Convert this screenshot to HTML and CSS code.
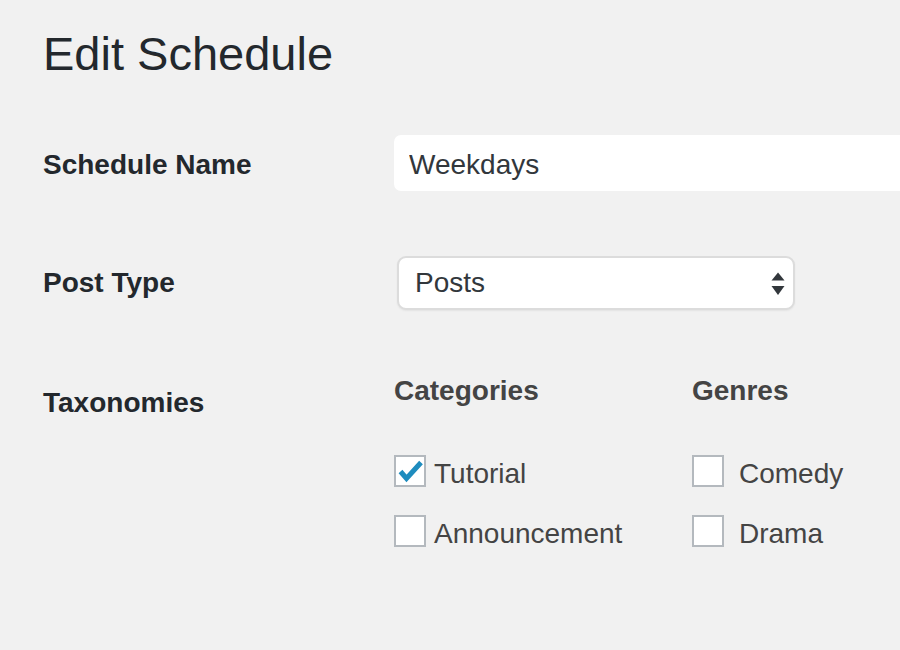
FILE: index.html
```html
<!DOCTYPE html>
<html lang="en">
<head>
<meta charset="utf-8">
<title>Edit Schedule</title>
<link rel="stylesheet" href="styles.css">
</head>
<body>
<div class="wrap">
  <h1 class="page-title">Edit Schedule</h1>
  <div class="form">
    <div class="row row-name">
      <label class="th" for="name">Schedule Name</label>
      <div class="td">
        <input id="name" class="text-input" type="text" value="Weekdays">
      </div>
    </div>
    <div class="row row-type">
      <label class="th" for="ptype">Post Type</label>
      <div class="td">
        <div class="select-wrap">
          <select id="ptype" class="select"><option>Posts</option></select>
          <svg class="select-arrows" width="14" height="24" viewBox="0 0 14 24" aria-hidden="true">
            <polygon points="0.5,8.5 7,0.5 13.5,8.5" fill="#32373c"/>
            <polygon points="0.5,14 13.5,14 7,23" fill="#32373c"/>
          </svg>
        </div>
      </div>
    </div>
    <div class="row row-tax">
      <div class="th th-tax">Taxonomies</div>
      <div class="td tax-cols">
        <div class="tax-col">
          <h3 class="tax-title">Categories</h3>
          <ul class="checks">
            <li class="check-item">
              <span class="box checked">
                <svg width="32" height="32" viewBox="0 0 32 32" aria-hidden="true"><path d="M6.5 16.5 L12.5 23.5 L27 7.5" fill="none" stroke="#1e8cbe" stroke-width="5"/></svg>
              </span>
              <span class="check-label">Tutorial</span>
            </li>
            <li class="check-item">
              <span class="box"></span>
              <span class="check-label">Announcement</span>
            </li>
          </ul>
        </div>
        <div class="tax-col">
          <h3 class="tax-title">Genres</h3>
          <ul class="checks checks-wide">
            <li class="check-item">
              <span class="box"></span>
              <span class="check-label">Comedy</span>
            </li>
            <li class="check-item">
              <span class="box"></span>
              <span class="check-label">Drama</span>
            </li>
          </ul>
        </div>
      </div>
    </div>
  </div>
</div>
</body>
</html>
```

FILE: styles.css
```css
html, body {
  margin: 0;
  padding: 0;
  background: #f1f1f1;
  overflow: hidden;
}

body {
  font-family: "Liberation Sans", Arial, Helvetica, sans-serif;
  color: #23282d;
  width: 900px;
  height: 650px;
}

.wrap {
  padding-left: 43px;
}

.page-title {
  margin: 0;
  padding-top: 26px;
  font-size: 47px;
  line-height: 56px;
  font-weight: 400;
  color: #23282d;
}

.row {
  display: flex;
}

.th {
  flex: 0 0 351px;
  font-size: 28px;
  line-height: 32px;
  font-weight: 700;
  color: #23282d;
}

.row-name {
  margin-top: 53px;
  align-items: baseline;
}

.row-type {
  margin-top: 65px;
  align-items: baseline;
}

.row-tax {
  margin-top: 65px;
  align-items: flex-start;
}

.th-tax {
  padding-top: 12px;
}

.text-input {
  display: block;
  box-sizing: border-box;
  width: 506px;
  height: 56px;
  margin: 0;
  padding: 4px 14px 0 15px;
  border: 0;
  border-radius: 7px 0 0 7px;
  background: #fff;
  font-family: inherit;
  font-size: 28px;
  color: #32373c;
  outline: none;
}

.select-wrap {
  position: relative;
  margin-left: 3px;
  width: 398px;
}

.select {
  -webkit-appearance: none;
  appearance: none;
  display: block;
  box-sizing: border-box;
  width: 398px;
  height: 54px;
  margin: 0;
  padding: 0 40px 0 16px;
  border: 2px solid #dcdcdc;
  border-radius: 9px;
  background: #fff;
  box-shadow: 0 1px 2px rgba(0, 0, 0, 0.06);
  font-family: inherit;
  font-size: 28px;
  line-height: 50px;
  color: #32373c;
  outline: none;
}

.select-arrows {
  position: absolute;
  right: 10px;
  top: 16px;
  pointer-events: none;
}

.tax-cols {
  display: flex;
}

.tax-col {
  flex: 0 0 298px;
}

.tax-title {
  margin: 0;
  font-size: 28px;
  line-height: 32px;
  font-weight: 700;
  color: #444;
}

.checks {
  list-style: none;
  margin: 48px 0 0;
  padding: 0;
  display: flex;
  flex-direction: column;
  gap: 25px;
}

.check-item {
  display: flex;
  align-items: flex-start;
  gap: 8px;
}

.checks-wide .check-item {
  gap: 15px;
}

.box {
  flex: 0 0 auto;
  box-sizing: border-box;
  width: 32px;
  height: 32px;
  border: 2px solid #b4b9be;
  background: #fff;
  position: relative;
}

.box svg {
  position: absolute;
  left: -2px;
  top: -2px;
}

.check-label {
  margin-top: 3px;
  font-size: 28px;
  line-height: 32px;
  color: #444;
}
```
